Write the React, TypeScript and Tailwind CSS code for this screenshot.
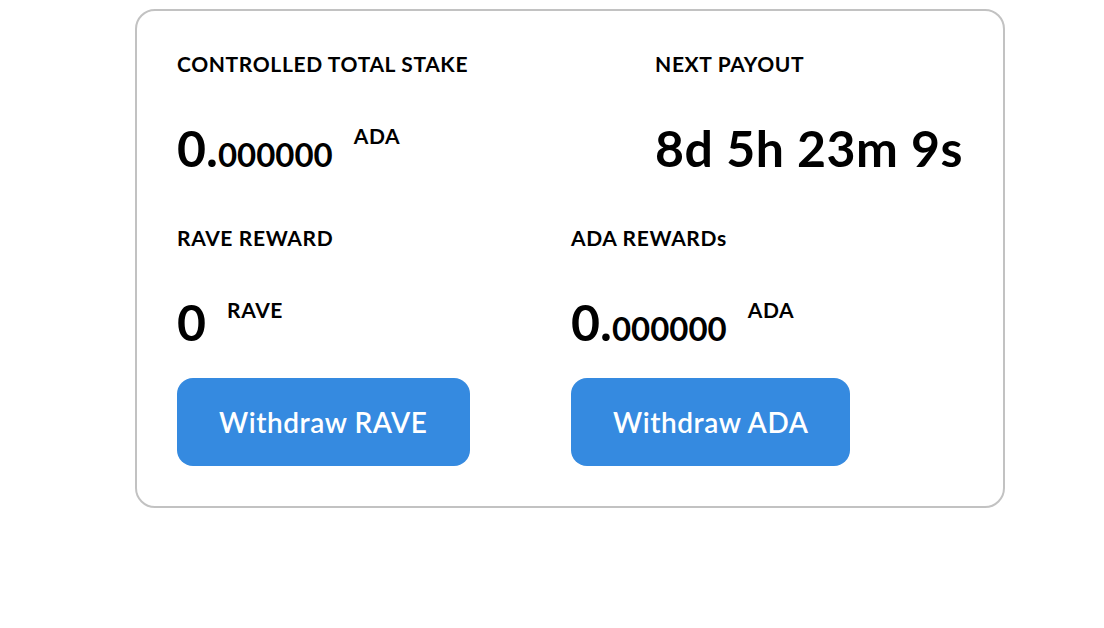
import React from 'react';

const FONT = "font-['Lato','Noto_Sans',sans-serif]";

const Label: React.FC<{ children: React.ReactNode }> = ({ children }) => (
  <div className="text-[21px] leading-[24px] font-bold tracking-[0.03em] text-black">
    {children}
  </div>
);

const Amount: React.FC<{ whole: string; frac?: string; unit: string }> = ({
  whole,
  frac,
  unit,
}) => (
  <div className="flex items-baseline h-[48px] text-black">
    <span className="text-[50px] leading-[48px] font-bold">{whole}</span>
    {frac && <span className="text-[33px] leading-[48px] font-bold">{frac}</span>}
    <span className="ml-[21px] text-[21px] leading-[24px] font-bold tracking-[0.03em] relative -top-[23px]">
      {unit}
    </span>
  </div>
);

const WithdrawButton: React.FC<{ children: React.ReactNode }> = ({ children }) => (
  <button
    type="button"
    className="h-[88px] px-[42px] rounded-[16px] bg-[#358ae0] text-white text-[28px] font-semibold tracking-[0.02em]"
  >
    {children}
  </button>
);

export default function App() {
  return (
    <div className={`${FONT} w-[1104px] h-[628px] bg-white pt-[9px] pl-[135px]`}>
      <div className="w-[870px] border-2 border-[#c2c2c2] rounded-[20px] px-[40px] pt-[41px] pb-[40px]">
        {/* top row */}
        <div className="flex justify-between">
          <div>
            <Label>CONTROLLED TOTAL STAKE</Label>
            <div className="mt-[48px]">
              <Amount whole="0." frac="000000" unit="ADA" />
            </div>
          </div>
          <div>
            <Label>NEXT PAYOUT</Label>
            <div className="mt-[48px] text-[50px] leading-[48px] font-bold tracking-[0.01em] text-black">
              8d 5h 23m 9s
            </div>
          </div>
        </div>

        {/* bottom row */}
        <div className="flex mt-[54px]">
          <div className="w-[394px]">
            <Label>RAVE REWARD</Label>
            <div className="mt-[48px]">
              <Amount whole="0" unit="RAVE" />
            </div>
            <div className="flex mt-[32px]">
              <WithdrawButton>Withdraw RAVE</WithdrawButton>
            </div>
          </div>
          <div>
            <Label>ADA REWARDs</Label>
            <div className="mt-[48px]">
              <Amount whole="0." frac="000000" unit="ADA" />
            </div>
            <div className="flex mt-[32px]">
              <WithdrawButton>Withdraw ADA</WithdrawButton>
            </div>
          </div>
        </div>
      </div>
    </div>
  );
}
